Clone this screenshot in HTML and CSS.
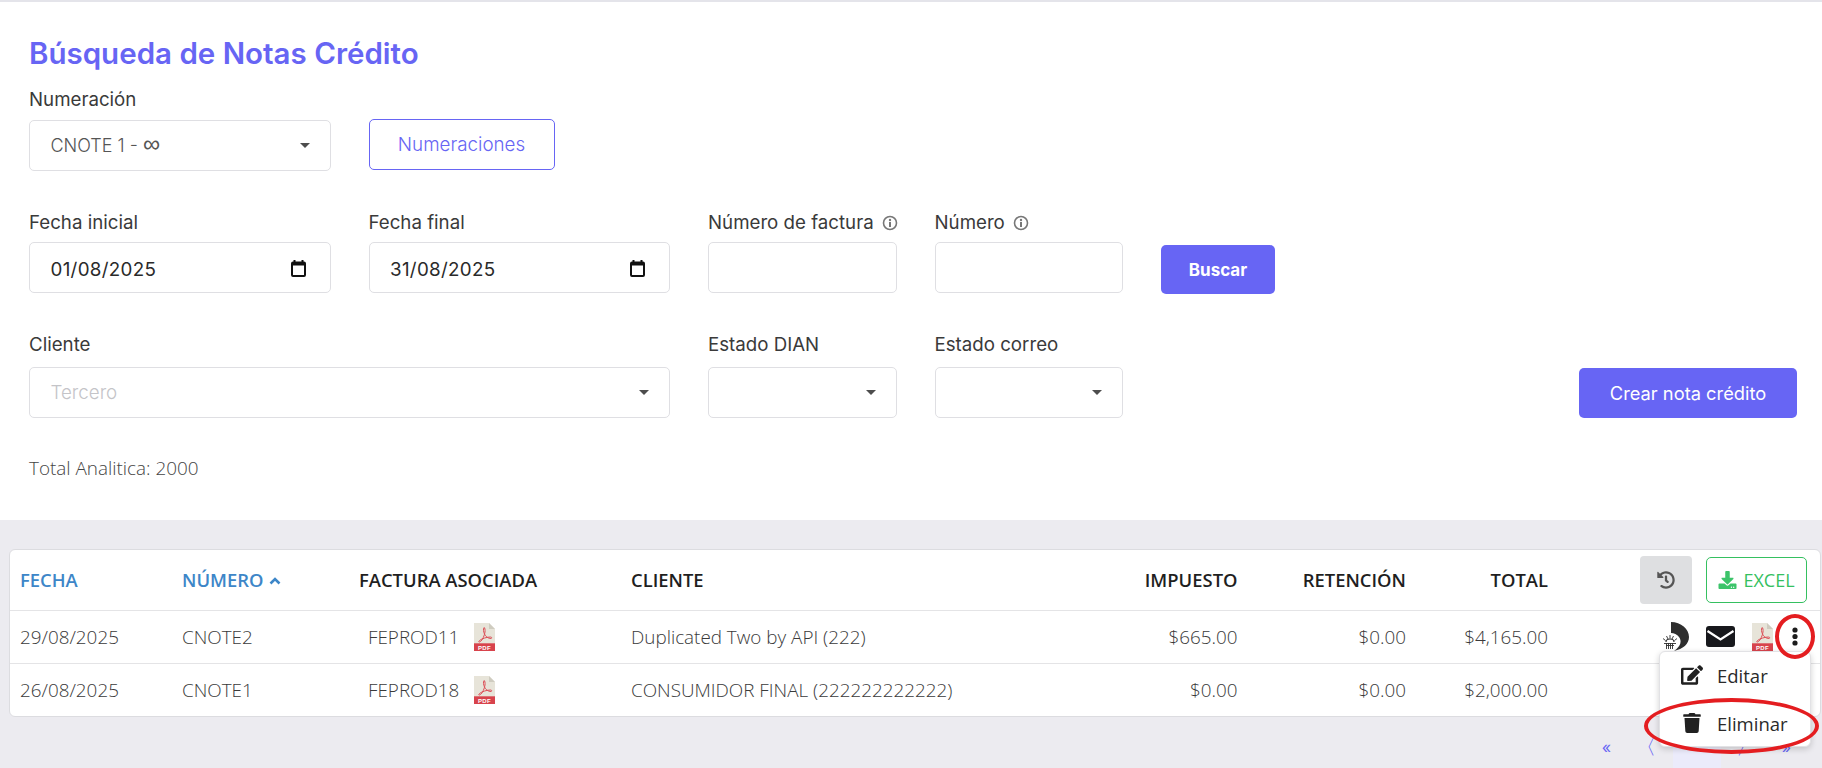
FILE: index.html
```html
<!DOCTYPE html>
<html lang="es">
<head>
<meta charset="utf-8">
<title>Búsqueda de Notas Crédito</title>
<link rel="stylesheet" href="styles.css">
</head>
<body>
<div class="page">
  <section class="panel">
    <h1 class="title">Búsqueda de Notas Crédito</h1>

    <div class="form-row row-first">
      <div class="group wide">
        <label class="label">Numeración</label>
        <div class="box"><span class="value muted">CNOTE 1 - <span class="inf">∞</span></span><i class="caret"></i></div>
      </div>
      <button class="btn-outline">Numeraciones</button>
    </div>

    <div class="form-row row-dates">
      <div class="group wide">
        <label class="label">Fecha inicial</label>
        <div class="box"><span class="value">01/08/2025</span>
          <svg class="cal" viewBox="0 0 15 17"><path d="M3.500 0V2M11.500 0V2" stroke="#111" stroke-width="2"/><rect x="1" y="2.500" width="13" height="13.500" rx="1" fill="none" stroke="#111" stroke-width="2"/><rect x="1" y="2" width="13" height="3.500" fill="#111"/></svg>
        </div>
      </div>
      <div class="group wide">
        <label class="label">Fecha final</label>
        <div class="box"><span class="value">31/08/2025</span>
          <svg class="cal" viewBox="0 0 15 17"><path d="M3.500 0V2M11.500 0V2" stroke="#111" stroke-width="2"/><rect x="1" y="2.500" width="13" height="13.500" rx="1" fill="none" stroke="#111" stroke-width="2"/><rect x="1" y="2" width="13" height="3.500" fill="#111"/></svg>
        </div>
      </div>
      <div class="group narrow">
        <label class="label">Número de factura
          <svg class="info" viewBox="0 0 16 16"><circle cx="8" cy="8" r="6.500" fill="none" stroke="#777" stroke-width="1.600"/><rect x="7" y="7" width="2" height="5" fill="#777"/><circle cx="8" cy="5" r="1.200" fill="#777"/></svg>
        </label>
        <div class="box"></div>
      </div>
      <div class="group narrow">
        <label class="label">Número
          <svg class="info" viewBox="0 0 16 16"><circle cx="8" cy="8" r="6.500" fill="none" stroke="#777" stroke-width="1.600"/><rect x="7" y="7" width="2" height="5" fill="#777"/><circle cx="8" cy="5" r="1.200" fill="#777"/></svg>
        </label>
        <div class="box"></div>
      </div>
      <button class="btn-search">Buscar</button>
    </div>

    <div class="form-row row-client">
      <div class="group client">
        <label class="label">Cliente</label>
        <div class="box"><span class="value placeholder">Tercero</span><i class="caret"></i></div>
      </div>
      <div class="group narrow">
        <label class="label">Estado DIAN</label>
        <div class="box"><i class="caret caret-end"></i></div>
      </div>
      <div class="group narrow">
        <label class="label">Estado correo</label>
        <div class="box"><i class="caret caret-end"></i></div>
      </div>
      <button class="btn-create">Crear nota crédito</button>
    </div>

    <p class="total">Total Analitica: 2000</p>
  </section>

  <section class="content">
    <div class="card">
      <table class="grid">
        <thead>
          <tr>
            <th class="c-date sorted">FECHA</th>
            <th class="c-num sorted">NÚMERO <svg class="chev" viewBox="0 0 12 8"><path d="M1.500 6.500L6 2L10.500 6.500" fill="none" stroke="#3d86c8" stroke-width="2.600"/></svg></th>
            <th class="c-inv">FACTURA ASOCIADA</th>
            <th class="c-client">CLIENTE</th>
            <th class="c-tax num">IMPUESTO</th>
            <th class="c-ret num">RETENCIÓN</th>
            <th class="c-tot num">TOTAL</th>
            <th class="c-act">
              <div class="head-actions">
                <button class="btn-history"><svg viewBox="0 0 512 512"><path fill="#555" d="M504 255.531c.253 136.64-111.18 248.372-247.82 248.468-59.015.042-113.223-20.53-155.822-54.911-11.077-8.94-11.905-25.541-1.839-35.607l11.267-11.267c8.609-8.609 22.353-9.551 31.891-1.984C173.062 425.135 212.781 440 256 440c101.705 0 184-82.311 184-184 0-101.705-82.311-184-184-184-48.814 0-93.149 18.969-126.068 49.932l50.754 50.754c10.08 10.08 2.941 27.314-11.313 27.314H24c-8.837 0-16-7.163-16-16V38.627c0-14.254 17.234-21.393 27.314-11.314l49.372 49.372C129.209 34.136 189.552 8 256 8c136.81 0 247.747 110.78 248 247.531zm-180.912 78.784l9.823-12.63c8.138-10.463 6.253-25.542-4.21-33.679L288 256.349V152c0-13.255-10.745-24-24-24h-16c-13.255 0-24 10.745-24 24v135.651l65.409 50.874c10.463 8.137 25.541 6.253 33.679-4.21z"/></svg></button>
                <button class="btn-excel"><svg viewBox="0 0 512 512"><path fill="#3cc46a" d="M216 0h80c13.3 0 24 10.7 24 24v168h87.7c17.8 0 26.7 21.5 14.1 34.1L269.7 378.3c-7.5 7.5-19.8 7.5-27.3 0L90.1 226.1c-12.6-12.6-3.7-34.1 14.1-34.1H192V24c0-13.3 10.7-24 24-24zm296 376v112c0 13.3-10.7 24-24 24H24c-13.3 0-24-10.7-24-24V376c0-13.3 10.7-24 24-24h146.7l49 49c20.1 20.1 52.5 20.1 72.6 0l49-49H488c13.3 0 24 10.7 24 24zm-124 88c0-11-9-20-20-20s-20 9-20 20 9 20 20 20 20-9 20-20zm64 0c0-11-9-20-20-20s-20 9-20 20 9 20 20 20 20-9 20-20z"/></svg>EXCEL</button>
              </div>
            </th>
          </tr>
        </thead>
        <tbody>
          <tr>
            <td>29/08/2025</td>
            <td>CNOTE2</td>
            <td><div class="inv"><span class="inv-code">FEPROD11</span>
              <svg class="pdf-small" viewBox="0 0 21 28"><path d="M0 0H15L21 6V28H0Z" fill="#e7e4d9"/><path d="M15 0L21 6H15Z" fill="#cfccc0"/><path d="M10 4.500C9 6 9.500 9 10.500 11C11.500 13.500 14 15.500 17 15.500C18 15.500 18 14 16.500 14C13 14 8 15.500 5.500 17.500C4 19 5 19.500 6.500 18.500C8.500 17 10.500 12.500 11 9C11.200 7 11 4.500 10 4.500Z" fill="none" stroke="#dc5058" stroke-width="1"/><rect y="20.300" width="21" height="7.700" fill="#d8434c"/><text x="10.500" y="26.700" text-anchor="middle" class="pdf-text">PDF</text></svg>
            </div></td>
            <td>Duplicated Two by API (222)</td>
            <td class="num">$665.00</td>
            <td class="num">$0.00</td>
            <td class="num">$4,165.00</td>
            <td>
              <div class="row-actions">
                <svg class="ic-status" viewBox="0 0 26 29">
                  <path d="M8 0C18 0 26 7 26 15C26 22 20 27 11 29C18 24 19 19 16 15C14 12.500 11 11 8 11Z" fill="#2e2e2e"/>
                  <path d="M7 13V16.500M3.500 14L5 17M10.500 14L9 17M0 16.500L2.500 18.500M14 16.500L11.500 18.500" stroke="#2e2e2e" stroke-width=".9"/>
                  <path d="M3 20A4 3 0 0 1 11 20" fill="none" stroke="#2e2e2e" stroke-width="1.200"/>
                  <path d="M1 21.500H13M3 23.500H11M3.500 21V27M5.500 21V27M7.500 21V27M9.500 21V27" stroke="#2e2e2e" stroke-width=".9"/>
                </svg>
                <svg class="ic-mail" viewBox="0 0 29 21"><rect width="29" height="21" rx="3" fill="#17181c"/><path d="M1.500 5L14.500 13.500L27.500 5" fill="none" stroke="#fff" stroke-width="2.200"/></svg>
                <svg class="pdf-big" viewBox="0 0 21 28"><path d="M0 0H15L21 6V28H0Z" fill="#e7e4d9"/><path d="M15 0L21 6H15Z" fill="#cfccc0"/><path d="M10 4.500C9 6 9.500 9 10.500 11C11.500 13.500 14 15.500 17 15.500C18 15.500 18 14 16.500 14C13 14 8 15.500 5.500 17.500C4 19 5 19.500 6.500 18.500C8.500 17 10.500 12.500 11 9C11.200 7 11 4.500 10 4.500Z" fill="none" stroke="#dc5058" stroke-width="1"/><rect y="20.300" width="21" height="7.700" fill="#d8434c"/><text x="10.500" y="26.700" text-anchor="middle" class="pdf-text">PDF</text></svg>
                <div class="more">
                  <svg class="ic-dots" viewBox="0 0 6 19"><circle cx="3" cy="3" r="2.600" fill="#1c1c1c"/><circle cx="3" cy="9.500" r="2.600" fill="#1c1c1c"/><circle cx="3" cy="16" r="2.600" fill="#1c1c1c"/></svg>
                  <span class="ring ring-dots"></span>
                  <div class="menu">
                    <div class="menu-item">
                      <svg class="ic-edit" viewBox="0 0 576 512"><path fill="#212121" d="M402.6 83.2l90.2 90.2c3.8 3.8 3.8 10 0 13.8L274.4 405.6l-92.8 10.3c-12.4 1.4-22.9-9.1-21.5-21.5l10.3-92.8L388.8 83.2c3.8-3.8 10-3.8 13.8 0zm162-22.9l-48.8-48.8c-15.2-15.2-39.9-15.2-55.2 0l-35.4 35.4c-3.8 3.8-3.8 10 0 13.8l90.2 90.2c3.8 3.8 10 3.8 13.8 0l35.4-35.4c15.2-15.3 15.2-40 0-55.2zM384 346.2V448H64V128h229.8c3.2 0 6.2-1.3 8.5-3.5l40-40c7.6-7.6 2.2-20.5-8.5-20.5H48C21.5 64 0 85.5 0 112v352c0 26.5 21.5 48 48 48h352c26.5 0 48-21.5 48-48V306.2c0-10.7-12.9-16-20.5-8.5l-40 40c-2.2 2.3-3.5 5.3-3.5 8.5z"/></svg>
                      <span>Editar</span>
                    </div>
                    <div class="menu-item">
                      <svg class="ic-trash" viewBox="0 0 448 512"><path fill="#212121" d="M432 32H312l-9.4-18.7A24 24 0 0 0 281.1 0H166.8a23.72 23.72 0 0 0-21.4 13.3L136 32H16A16 16 0 0 0 0 48v32a16 16 0 0 0 16 16h416a16 16 0 0 0 16-16V48a16 16 0 0 0-16-16zM53.2 467a48 48 0 0 0 47.9 45h245.8a48 48 0 0 0 47.9-45L416 128H32z"/></svg>
                      <span>Eliminar</span>
                    </div>
                    <span class="ring ring-delete"></span>
                  </div>
                </div>
              </div>
            </td>
          </tr>
          <tr>
            <td>26/08/2025</td>
            <td>CNOTE1</td>
            <td><div class="inv"><span class="inv-code">FEPROD18</span>
              <svg class="pdf-small" viewBox="0 0 21 28"><path d="M0 0H15L21 6V28H0Z" fill="#e7e4d9"/><path d="M15 0L21 6H15Z" fill="#cfccc0"/><path d="M10 4.500C9 6 9.500 9 10.500 11C11.500 13.500 14 15.500 17 15.500C18 15.500 18 14 16.500 14C13 14 8 15.500 5.500 17.500C4 19 5 19.500 6.500 18.500C8.500 17 10.500 12.500 11 9C11.200 7 11 4.500 10 4.500Z" fill="none" stroke="#dc5058" stroke-width="1"/><rect y="20.300" width="21" height="7.700" fill="#d8434c"/><text x="10.500" y="26.700" text-anchor="middle" class="pdf-text">PDF</text></svg>
            </div></td>
            <td>CONSUMIDOR FINAL (222222222222)</td>
            <td class="num">$0.00</td>
            <td class="num">$0.00</td>
            <td class="num">$2,000.00</td>
            <td></td>
          </tr>
        </tbody>
      </table>
    </div>

    <nav class="pager">
      <a class="page-link">«</a>
      <a class="page-link prev">〈</a>
      <a class="page-link active">1</a>
      <a class="page-link next">〉</a>
      <a class="page-link">»</a>
    </nav>
  </section>
</div>
</body>
</html>
```

FILE: styles.css
```css
* { box-sizing: border-box; }
html, body { margin: 0; height: 100%; overflow: hidden; }
body {
  background: #ecebf0;
  font-family: "Inter", "Liberation Sans", sans-serif;
  color: #333;
}
.pdf-text {
  font-family: "Liberation Sans", sans-serif;
  font-size: 6px;
  font-weight: 700;
  fill: #fff;
  letter-spacing: .3px;
}
.page { height: 768px; overflow: hidden; }

.panel {
  height: 520px;
  background: #fff;
  border-top: 2px solid #e4e4ea;
  padding: 31px 25px 0 29px;
}
.title {
  margin: 0;
  height: 40px;
  font-size: 29.500px;
  line-height: 40px;
  font-weight: 600;
  color: #6765f4;
}
.form-row { display: flex; align-items: flex-start; gap: 38px; }
.row-first { margin-top: 14px; }
.row-dates { margin-top: 39px; }
.row-client { margin-top: 39px; }

.group { display: flex; flex-direction: column; }
.wide { width: 301.500px; }
.narrow { width: 188.500px; }
.client { width: 641px; }
.label {
  display: flex;
  align-items: center;
  gap: 7px;
  height: 25px;
  padding-top: 1px;
  font-size: 18.700px;
  line-height: 24px;
  font-weight: 400;
  color: #3a3a3a;
  margin-bottom: 8px;
  white-space: nowrap;
}
.row-dates .label { margin-bottom: 7px; }
.row-client .label { height: 24px; padding-top: 0; margin-bottom: 10px; }
.box {
  height: 51px;
  display: flex;
  align-items: center;
  justify-content: space-between;
  padding: 0 21px 0 20.500px;
  background: #fff;
  border: 1px solid #dfdfe3;
  border-radius: 5px;
}
.value { font-size: 18.800px; color: #2a2a2a; letter-spacing: .3px; }
.row-dates .value { padding-top: 3px; }
.muted { color: #555; letter-spacing: 0; font-size: 18px; font-weight: 300; padding-bottom: 3px; }
.inf { font-family: "DejaVu Sans", sans-serif; font-size: 24px; line-height: 1; }
.placeholder { color: #c4c4c8; letter-spacing: 0; font-weight: 300; }
.caret {
  width: 0; height: 0;
  margin-left: auto;
  margin-right: -1px;
  border-left: 5px solid transparent;
  border-right: 5px solid transparent;
  border-top: 5px solid #4d4d4d;
}
.caret-end { margin-right: -1px; }
.cal { width: 15px; height: 17px; flex: none; margin: 2px 3px 0 0; }
.info { width: 16px; height: 16px; flex: none; }
.row-dates .info { margin-left: 1px; }

button { font-family: inherit; cursor: pointer; }
.btn-outline {
  margin-top: 32px;
  width: 186px;
  height: 51px;
  background: #fff;
  border: 1px solid #6765f4;
  border-radius: 5px;
  color: #6765f4;
  font-size: 18.800px;
  font-weight: 300;
}
.btn-search {
  margin-top: 35px;
  width: 114px;
  height: 49px;
  background: #6765f4;
  border: 0;
  border-radius: 5px;
  color: #fff;
  font-size: 17px;
  font-weight: 700;
}
.btn-create {
  margin-top: 35px;
  margin-left: auto;
  width: 218px;
  height: 50px;
  background: #6765f4;
  border: 0;
  border-radius: 5px;
  color: #fff;
  font-size: 18.300px;
  font-weight: 400;
}
.total {
  margin: 38px 0 0;
  font-family: "Open Sans", "Liberation Sans", sans-serif;
  font-size: 18.900px;
  line-height: 24px;
  font-weight: 300;
  color: #444;
}

.content { padding: 29px 1px 0 9px; }
.card {
  height: 168px;
  background: #fff;
  border: 1px solid #dcdce0;
  border-radius: 6px;
}
.grid {
  width: 100%;
  table-layout: fixed;
  border-collapse: collapse;
  font-family: "Open Sans", "Liberation Sans", sans-serif;
  font-size: 18.400px;
}
.grid th {
  height: 60px;
  padding: 0 12px 0 10px;
  text-align: left;
  font-weight: 600;
  color: #1f1f1f;
  border-bottom: 1px solid #e4e4e6;
  white-space: nowrap;
}
.grid td {
  height: 53px;
  padding: 0 12px 0 10px;
  font-size: 18.850px;
  color: #3a3a3a;
  font-weight: 300;
  border-bottom: 1px solid #e4e4e6;
  white-space: nowrap;
}
.grid tbody tr:last-child td { border-bottom: 0; }
.grid .num { text-align: right; }
.grid th.sorted { color: #3d86c8; }
.c-date { width: 162px; }
.c-num { width: 177px; }
.c-inv { width: 272px; }
.c-client { width: 431px; }
.c-tax { width: 197.500px; }
.c-ret { width: 168.500px; }
.c-tot { width: 142px; }
.chev { width: 12px; height: 8px; margin-left: 1px; vertical-align: 2px; }

.head-actions { display: flex; justify-content: flex-end; align-items: center; gap: 14px; margin-right: 1px; }
.btn-history {
  width: 52px; height: 48px;
  display: flex; align-items: center; justify-content: center;
  background: #dedfe1;
  border: 0;
  border-radius: 4px;
}
.btn-history svg { width: 18px; height: 18px; }
.btn-excel {
  width: 101px; height: 46px;
  display: flex; align-items: center; justify-content: center; gap: 6px;
  background: #fff;
  border: 1.500px solid #35c060;
  border-radius: 5px;
  color: #35c060;
  font-family: "Open Sans", "Liberation Sans", sans-serif;
  font-size: 18px;
  font-weight: 400;
}
.btn-excel svg { width: 19px; height: 18px; flex: none; }

.inv { display: flex; align-items: center; padding-left: 9px; }
.inv-code { width: 105.500px; flex: none; }
.pdf-small { width: 21px; height: 28px; flex: none; }
.pdf-big { width: 21px; height: 28px; flex: none; }

.row-actions { display: flex; justify-content: flex-end; align-items: center; margin-right: -3px; }
.ic-status { width: 26px; height: 29px; }
.ic-mail { width: 29px; height: 21px; margin-left: 17px; }
.pdf-big { margin-left: 17px; }
.more {
  position: relative;
  width: 32px;
  margin-left: 6px;
  display: flex;
  justify-content: center;
}
.ic-dots { width: 6px; height: 19px; }
.ring {
  position: absolute;
  border: 4px solid #e41d20;
  border-radius: 50%;
  pointer-events: none;
}
.ring-dots { left: -4px; top: -13px; width: 40px; height: 45px; z-index: 4; }
.menu {
  position: absolute;
  right: 0;
  top: 24px;
  width: 152px;
  height: 96px;
  display: flex;
  flex-direction: column;
  gap: 2px;
  background: #fff;
  border: 1px solid #e2e2e5;
  border-radius: 6px;
  box-shadow: 0 2px 6px rgba(0,0,0,.18);
  z-index: 3;
}
.menu-item {
  height: 46px;
  display: flex;
  align-items: center;
  padding-left: 21px;
  gap: 14px;
  font-size: 18.500px;
  font-weight: 400;
  color: #2a2a2a;
}
.ic-edit { width: 22px; height: 20px; flex: none; }
.ic-trash { width: 18px; height: 20px; margin: 0 2px; flex: none; }
.ring-delete {
  left: -16px;
  top: 46px;
  width: 175px;
  height: 56px;
  border-width: 4.500px;
}

.pager {
  display: flex;
  justify-content: flex-end;
  margin-top: 8px;
  padding-right: 12px;
}
.page-link {
  width: 45px;
  height: 44px;
  display: flex;
  align-items: center;
  justify-content: center;
  font-size: 16px;
  color: #6765f4;
}
.page-link.prev { font-size: 20px; padding-right: 12px; }
.page-link.next { font-size: 20px; padding-left: 8px; }
.page-link.active {
  width: 48px;
  margin: 0 -1.500px;
  padding-bottom: 20px;
  background: #ebebfb;
}
```
